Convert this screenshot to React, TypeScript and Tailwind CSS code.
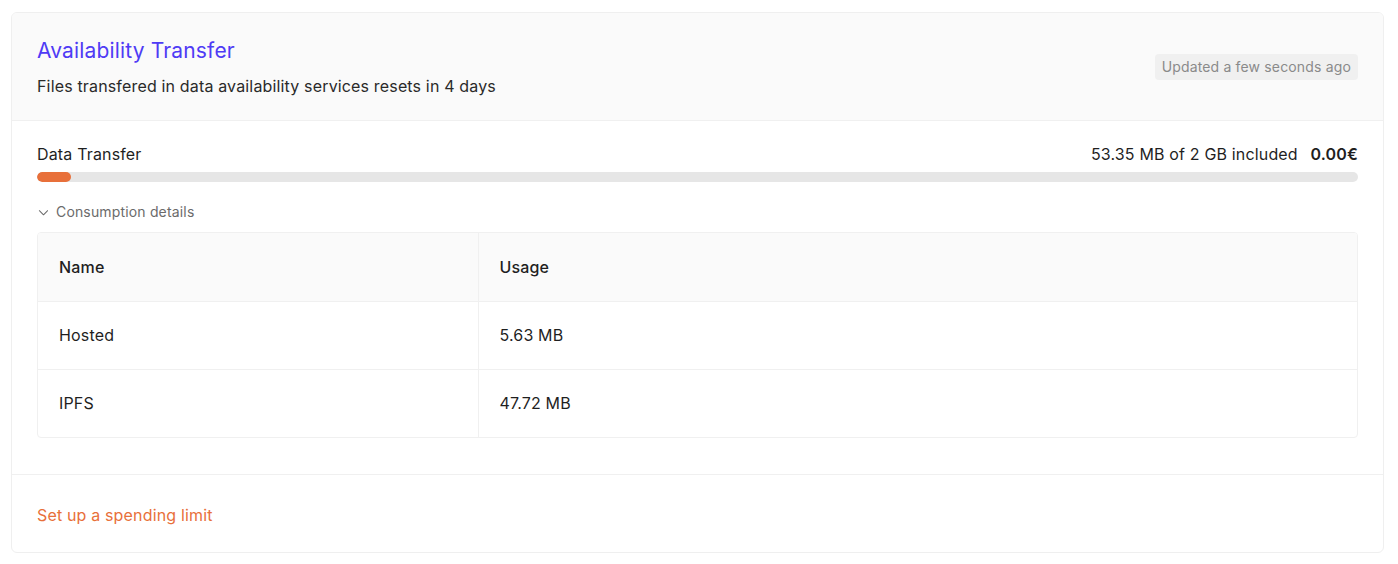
const rows = [
  { name: 'Hosted', usage: '5.63 MB' },
  { name: 'IPFS', usage: '47.72 MB' },
];

function ChevronDown() {
  return (
    <svg width="11" height="11" viewBox="0 0 12 12" fill="none" className="text-[#6b6b6b]">
      <path d="M1.5 4l4.5 4.5L10.5 4" stroke="currentColor" strokeWidth="1.1" strokeLinecap="round" strokeLinejoin="round" />
    </svg>
  );
}

export default function App() {
  const used = 53.35;
  const pct = Math.max((used / 2048) * 100, 2.6);

  return (
    <div className="min-h-screen bg-white pb-3 pl-[11px] pr-[14px] pt-3 font-['Inter','Noto_Sans',sans-serif] tracking-[0.01em] text-[#1f1f1f]">
      <div className="overflow-hidden rounded-md border border-[#efefef] bg-white">
        {/* Header */}
        <div className="flex items-start justify-between border-b border-[#f0f0f0] bg-[#fafafa] px-[25px] pb-[22px] pt-6">
          <div>
            <h2 className="text-[21px] leading-7 text-[#4f3bf5]">Availability Transfer</h2>
            <p className="mt-[9px] text-[16px] leading-6 text-[#2a2a2a]">
              Files transfered in data availability services resets in 4 days
            </p>
          </div>
          <span className="mt-[17px] rounded bg-[#f0f0f0] px-[7px] py-[3px] text-[14px] leading-5 text-[#8a8a8a]">
            Updated a few seconds ago
          </span>
        </div>

        {/* Body */}
        <div className="border-b border-[#f0f0f0] px-[25px] pb-9 pt-[21px]">
          <div className="flex items-center justify-between text-[16px] leading-6">
            <span>Data Transfer</span>
            <span>
              53.35 MB of 2 GB included <span className="ml-2 font-semibold">0.00€</span>
            </span>
          </div>
          <div className="mt-[6px] h-[10px] w-full overflow-hidden rounded-full bg-[#e6e6e6]">
            <div className="h-full rounded-full bg-[#e8703a]" style={{ width: `${pct}%` }} />
          </div>
          <button className="mt-5 flex items-center gap-[7px] pl-[1px] text-[14px] leading-5 text-[#6b6b6b]">
            <ChevronDown />
            Consumption details
          </button>
          <div className="mt-[10px] overflow-hidden rounded-sm border border-[#f0f0f0]">
            <table className="w-full border-collapse text-left text-[16px]">
              <thead>
                <tr className="h-[68px] bg-[#fafafa]">
                  <th className="w-[440px] border-r border-[#f0f0f0] px-[21px] font-medium">Name</th>
                  <th className="px-[21px] font-medium">Usage</th>
                </tr>
              </thead>
              <tbody>
                {rows.map((r) => (
                  <tr key={r.name} className="h-[68px] border-t border-[#f0f0f0]">
                    <td className="border-r border-[#f0f0f0] px-[21px]">{r.name}</td>
                    <td className="px-[21px]">{r.usage}</td>
                  </tr>
                ))}
              </tbody>
            </table>
          </div>
        </div>

        {/* Footer */}
        <div className="px-[25px] pb-[25px] pt-[28px]">
          <a href="#" className="text-[16px] leading-6 text-[#e8703a]">
            Set up a spending limit
          </a>
        </div>
      </div>
    </div>
  );
}
